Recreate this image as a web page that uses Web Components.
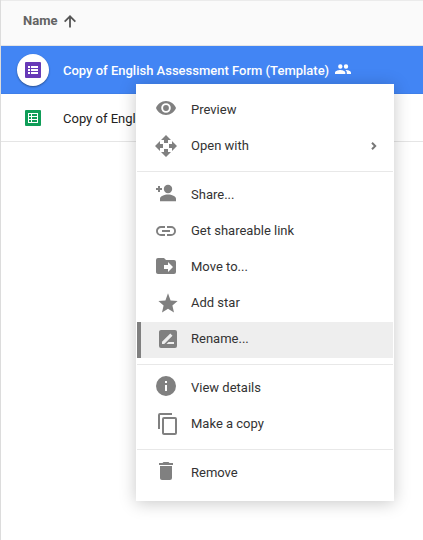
<!DOCTYPE html>
<html lang="en">
<head>
<meta charset="utf-8">
<meta name="viewport" content="width=device-width, initial-scale=1">
<title>Drive files</title>
<style>
html, body { margin: 0; min-height: 100vh; background: #fff; }
body { font-family: Roboto, "Liberation Sans", sans-serif; font-size: 13px; color: #222; }
</style>
</head>
<body>
<drive-page>
  <list-header>Name</list-header>
  <file-row icon="form" selected shared>Copy of English Assessment Form (Template)</file-row>
  <file-row icon="sheet">Copy of English</file-row>
  <context-menu slot="menu">
    <menu-item icon="preview">Preview</menu-item>
    <menu-item icon="openwith" submenu>Open with</menu-item>
    <menu-divider></menu-divider>
    <menu-item icon="share">Share...</menu-item>
    <menu-item icon="link">Get shareable link</menu-item>
    <menu-item icon="move">Move to...</menu-item>
    <menu-item icon="star">Add star</menu-item>
    <menu-item icon="rename" active>Rename...</menu-item>
    <menu-divider></menu-divider>
    <menu-item icon="info">View details</menu-item>
    <menu-item icon="copy">Make a copy</menu-item>
    <menu-divider></menu-divider>
    <menu-item icon="trash">Remove</menu-item>
  </context-menu>
</drive-page>
<script>
const ICONS = {
  up: ['0 0 24 24', '<path d="M4 12l1.700 1.700L10.800 8.500V20.500h2.400V8.500l5.100 5.200L20 12l-8-8z"/>'],
  form: ['0 0 16 16', '<rect width="16" height="16" rx="1" fill="#673ab7"/><path fill="#fff" d="M3 4h2v2H3zM6 4h7v2H6zM3 7h2v2H3zM6 7h7v2H6zM3 10h2v2H3zM6 10h7v2H6z"/>'],
  sheet: ['0 0 16 16', '<rect width="16" height="16" rx="1" fill="#0f9d58"/><path fill="#fff" fill-rule="evenodd" d="M3 3h10v10H3zM4 4v2h2V4zM7 4v2h5V4zM4 7v2h2V7zM7 7v2h5V7zM4 10v2h2v-2zM7 10v2h5v-2z"/>'],
  people: ['0 0 24 24', '<path d="M16.500 10a3.300 3.300 0 1 0 0-6.600 3.300 3.300 0 0 0 0 6.600zM8 10a3.300 3.300 0 1 0 0-6.600A3.300 3.300 0 0 0 8 10zM8 12c-2.700 0-8 1.300-8 4v2h15.500v-2c0-2.700-5.200-4-7.500-4zM16.500 12l-1 .1c1.300.8 2.200 2 2.200 3.900v2H24v-2c0-2.700-5-4-7.500-4z"/>'],
  preview: ['0 0 24 24', '<path fill-rule="evenodd" d="M12 3C7.400 3 3.600 5.900 2 10c1.600 4.100 5.400 7 10 7s8.400-2.900 10-7c-1.600-4.100-5.400-7-10-7zm0 11.800a4.800 4.800 0 1 1 0-9.600 4.800 4.800 0 0 1 0 9.600zm0-1.900a2.900 2.900 0 1 0 0-5.800 2.900 2.900 0 0 0 0 5.800z"/>'],
  openwith: ['0 0 24 24', '<path d="M10 9h4V6h3l-5-5-5 5h3zM9 10H6V7l-5 5 5 5v-3h3zM23 12l-5-5v3h-3v4h3v3zM14 15h-4v3H7l5 5 5-5h-3z"/>'],
  share: ['0 0 24 24', '<circle cx="14" cy="6" r="4.200"/><path d="M6 18.200v-2.400c0-2.500 4.300-4.200 8-4.200s8 1.700 8 4.200v2.400zM4 3h2v2h2v2H6v2H4V7H2V5h2z"/>'],
  link: ['0 0 24 24', '<path d="M3.900 12c0-1.710 1.390-3.100 3.100-3.100h4V7H7a5 5 0 0 0 0 10h4v-1.900H7A3.100 3.100 0 0 1 3.900 12zM8 13h8v-2H8zm9-6h-4v1.900h4a3.100 3.100 0 0 1 0 6.200h-4V17h4a5 5 0 0 0 0-10z"/>'],
  move: ['0 0 24 24', '<path fill-rule="evenodd" d="M10 3H4a2 2 0 0 0-2 2v12c0 1.100.9 2 2 2h16a2 2 0 0 0 2-2V7a2 2 0 0 0-2-2h-8zM14 17v-3h-4v-4h4V7l5 5z"/>'],
  star: ['0 0 24 24', '<path d="M14 17.800L20 21.500l-1.600-6.900L23.600 10l-7-.6L14 2.300l-2.600 7.100-7 .6 5.200 4.600L8 21.500z"/>'],
  rename: ['0 0 24 24', '<path fill-rule="evenodd" d="M7 3h14a2 2 0 0 1 2 2v14a2 2 0 0 1-2 2H7a2 2 0 0 1-2-2V5c0-1.100.9-2 2-2zM8 17h2.200l8.300-8.300-2.200-2.200L8 14.800zM12.500 17H20v-2h-5.500z"/>'],
  info: ['0 0 24 24', '<path fill-rule="evenodd" d="M12 0a10 10 0 1 0 0 20 10 10 0 0 0 0-20zm1 15h-2V9h2zm0-8h-2V5h2z"/>'],
  copy: ['0 0 24 24', '<path fill-rule="evenodd" d="M18 1H6a2 2 0 0 0-2 2v14h2V3h12zM21 5H10a2 2 0 0 0-2 2v14c0 1.100.9 2 2 2h11a2 2 0 0 0 2-2V7a2 2 0 0 0-2-2zm0 16H10V7h11z"/>'],
  trash: ['0 0 24 24', '<path d="M6 17c0 1.100.9 2 2 2h8a2 2 0 0 0 2-2V5H6zM19 2h-3.500l-1-1h-5l-1 1H5v2h14z"/>'],
  chevron: ['0 0 8 10', '<path d="M2 1.800L5.200 5 2 8.200" fill="none" stroke="currentColor" stroke-width="2"/>']
};

function define(tag, render) {
  customElements.define(tag, class extends HTMLElement {
    connectedCallback() {
      if (this.shadowRoot) return;
      const t = document.createElement('template');
      t.innerHTML = render(this);
      this.attachShadow({ mode: 'open' }).append(t.content.cloneNode(true));
    }
  });
}

define('ui-icon', el => {
  const [box, body] = ICONS[el.getAttribute('name')];
  return `<style>
    :host { display: block; flex: none; width: 24px; height: 24px; }
    svg { display: block; width: 100%; height: 100%; fill: currentColor; }
  </style><svg viewBox="${box}" aria-hidden="true">${body}</svg>`;
});

define('drive-page', () => `<style>
    :host { display: block; position: relative; box-sizing: border-box; min-height: 100vh; border-left: 1px solid #dcdcdc; }
    ::slotted([slot=menu]) { position: absolute; left: 135px; top: 84px; }
  </style><main><slot></slot></main><slot name="menu"></slot>`);

define('list-header', () => `<style>
    :host { display: block; background: #fafafa; border-top: 1px solid #ebebeb; border-bottom: 1px solid #e5e5e5; }
    button { display: flex; align-items: center; gap: 4px; height: 44px; padding: 0 22px 4px; border: 0; background: none; font: bold 13px/16px Roboto, "Liberation Sans", sans-serif; color: #636363; }
    ui-icon { width: 18px; height: 18px; color: #555; }
  </style><button type="button" aria-label="Name, sorted ascending"><slot></slot><ui-icon name="up"></ui-icon></button>`);

define('file-row', el => `<style>
    :host { display: flex; align-items: center; box-sizing: border-box; height: 48px; padding-left: 16px; border-bottom: 1px solid #e5e5e5; white-space: nowrap; overflow: hidden; line-height: 16px; }
    :host([selected]) { background: #4285f4; border-color: #3f7fe9; color: #fff; font-weight: 500; }
    .badge { display: flex; flex: none; align-items: center; justify-content: center; width: 32px; height: 32px; margin-right: 14px; border-radius: 50%; }
    :host([selected]) .badge { background: #fff; box-shadow: 0 1px 2px rgba(0,0,0,.4); }
    .badge ui-icon { width: 16px; height: 16px; }
    .name { padding-top: 2px; }
    .people { width: 16px; height: 16px; margin-left: 6px; }
  </style><span class="badge"><ui-icon name="${el.getAttribute('icon')}"></ui-icon></span><span class="name"><slot></slot></span>
  ${el.hasAttribute('shared') ? '<ui-icon class="people" name="people"></ui-icon>' : ''}`);

define('context-menu', () => `<style>
    :host { display: block; box-sizing: border-box; width: 258px; padding: 8px 0; border: 1px solid #fff; background: #fff; box-shadow: 0 2px 16px rgba(0,0,0,.22); }
  </style><div role="menu"><slot></slot></div>`);

define('menu-divider', () => `<style>
    :host { display: block; padding: 6px 0; }
    hr { margin: 0; border: 0; border-top: 1px solid #e8e8e8; }
  </style><hr>`);

define('menu-item', el => `<style>
    :host { display: block; }
    button { display: flex; align-items: center; box-sizing: border-box; width: 100%; height: 36px; padding: 0 15px 2px 13px; border: 0; border-left: 4px solid transparent; background: none; font: 13px/16px Roboto, "Liberation Sans", sans-serif; color: #333; text-align: left; }
    :host([active]) button { background: #eee; border-left-color: #808080; }
    ui-icon { color: #808080; }
    .label { flex: 1; margin-left: 13px; }
    .chevron { width: 8px; height: 10px; color: #777; }
  </style><button type="button" role="menuitem"><ui-icon name="${el.getAttribute('icon')}"></ui-icon><span class="label"><slot></slot></span>
  ${el.hasAttribute('submenu') ? '<ui-icon class="chevron" name="chevron"></ui-icon>' : ''}</button>`);
</script>
</body>
</html>
